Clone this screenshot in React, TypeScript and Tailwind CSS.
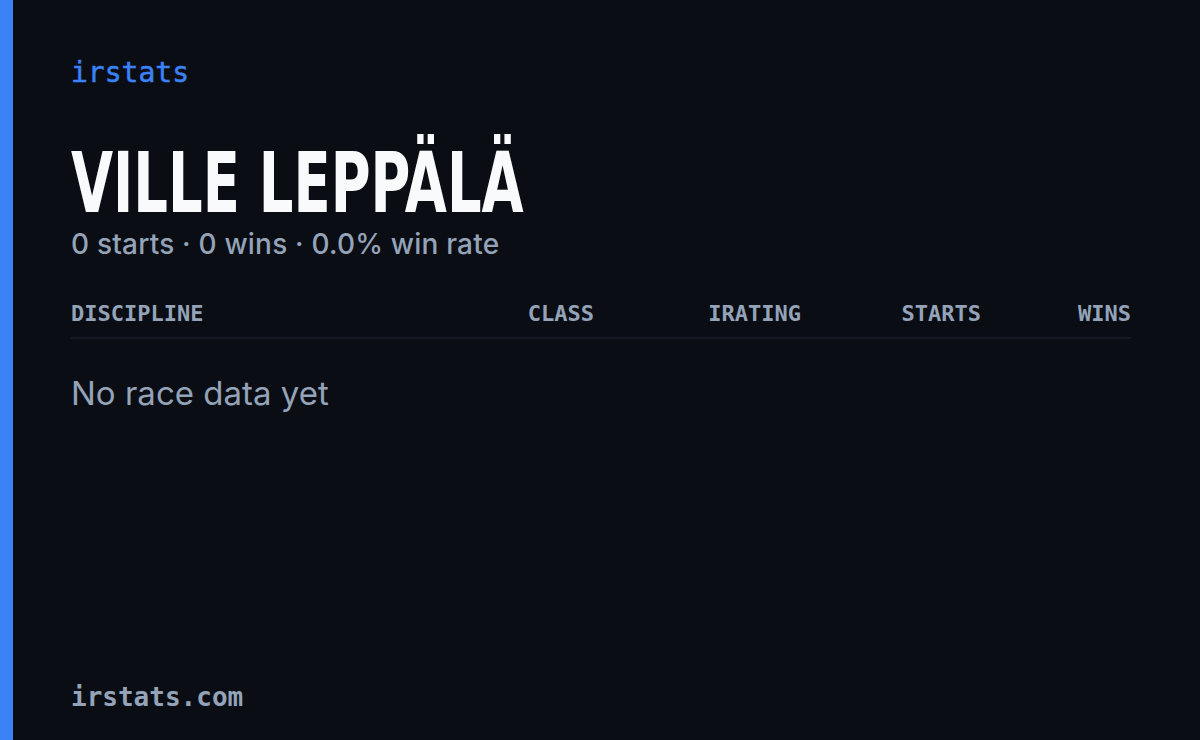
export default function App() {
  const cols = [
    { label: "CLASS", w: "w-[180px]" },
    { label: "IRATING", w: "w-[207px]" },
    { label: "STARTS", w: "w-[180px]" },
    { label: "WINS", w: "w-[150px]" },
  ];
  return (
    <div className="flex h-[740px] w-[1200px] overflow-hidden bg-[#0a0d14]">
      <div className="w-[13px] shrink-0 bg-[#3b82f6]" />
      <div className="flex flex-1 flex-col pl-[58px] pr-[69px] pt-[57px] pb-[27px]">
        <div className="font-['DejaVu_Sans_Mono',monospace] text-[28px] font-normal leading-[32px] text-[#3b82f6] [-webkit-text-stroke:0.5px_#3b82f6]">
          irstats
        </div>
        <div className="mt-[56px] h-[76px] origin-left scale-x-[0.72] whitespace-nowrap font-['Liberation_Sans_Narrow','DejaVu_Sans_Condensed',sans-serif] text-[84px] font-bold leading-[76px] text-[#f8fafc]">
          VILLE LEPPÄLÄ
        </div>
        <div className="mt-[3px] font-['Inter',sans-serif] text-[28px] font-medium leading-[40px] tracking-[0.2px] text-[#94a3b8]">
          0 starts · 0 wins · 0.0% win rate
        </div>
        <div className="mt-[37px] flex border-b-2 border-[#151a24] pb-[10px] font-['DejaVu_Sans_Mono',monospace] text-[22px] font-semibold leading-[26px] text-[#94a3b8]">
          <div className="flex-1">DISCIPLINE</div>
          {cols.map((c) => (
            <div key={c.label} className={`${c.w} text-right`}>
              {c.label}
            </div>
          ))}
        </div>
        <div className="mt-[34px] font-['Inter',sans-serif] text-[33px] leading-[40px] text-[#94a3b8]">
          No race data yet
        </div>
        <div className="mt-auto font-['DejaVu_Sans_Mono',monospace] text-[26px] font-bold leading-[32px] text-[#94a3b8]">
          irstats.com
        </div>
      </div>
    </div>
  );
}
